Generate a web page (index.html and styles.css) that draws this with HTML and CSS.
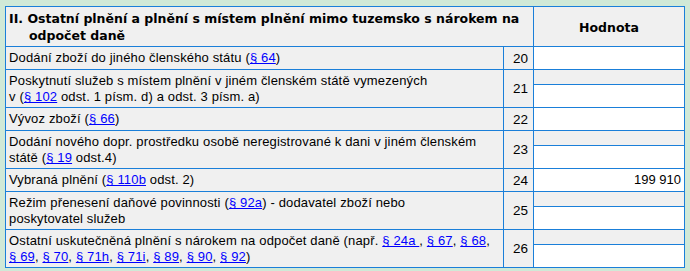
FILE: index.html
```html
<!DOCTYPE html>
<html lang="cs">
<head>
<meta charset="utf-8">
<link rel="stylesheet" href="styles.css">
</head>
<body>
<table class="dph">
  <colgroup><col class="c-label"><col class="c-num"><col class="c-val"></colgroup>
  <thead>
    <tr>
      <th class="head-title" colspan="2"><div class="hang">II. Ostatní plnění a plnění s místem plnění mimo tuzemsko s nárokem na<br>odpočet daně</div></th>
      <th class="head-val"><div class="hv">Hodnota</div></th>
    </tr>
  </thead>
  <tbody>
    <tr>
      <td class="lbl"><div class="in"><span class="t">Dodání zboží do jiného členského státu (<a href="#">§ 64</a>)</span></div></td>
      <td class="num">20</td>
      <td class="val"><div class="inp"></div></td>
    </tr>
    <tr class="tall">
      <td class="lbl"><div class="in"><span class="t">Poskytnutí služeb s místem plnění v jiném členském státě vymezených<br>v (<a href="#">§ 102</a> odst. 1 písm. d) a odst. 3 písm. a)</span></div></td>
      <td class="num">21</td>
      <td class="val"><div class="inp"></div></td>
    </tr>
    <tr>
      <td class="lbl"><div class="in"><span class="t">Vývoz zboží (<a href="#">§ 66</a>)</span></div></td>
      <td class="num">22</td>
      <td class="val"><div class="inp"></div></td>
    </tr>
    <tr class="tall">
      <td class="lbl"><div class="in"><span class="t">Dodání nového dopr. prostředku osobě neregistrované k dani v jiném členském<br>státě (<a href="#">§ 19</a> odst.4)</span></div></td>
      <td class="num">23</td>
      <td class="val"><div class="inp"></div></td>
    </tr>
    <tr>
      <td class="lbl"><div class="in"><span class="t">Vybraná plnění (<a href="#">§ 110b</a> odst. 2)</span></div></td>
      <td class="num">24</td>
      <td class="val"><div class="inp">199 910</div></td>
    </tr>
    <tr class="tall">
      <td class="lbl"><div class="in"><span class="t">Režim přenesení daňové povinnosti (<a href="#">§ 92a</a>) - dodavatel zboží nebo<br>poskytovatel služeb</span></div></td>
      <td class="num">25</td>
      <td class="val"><div class="inp"></div></td>
    </tr>
    <tr class="tall">
      <td class="lbl"><div class="in"><span class="t">Ostatní uskutečněná plnění s nárokem na odpočet daně (např. <a href="#">§ 24a </a>, <a href="#">§ 67</a>, <a href="#">§ 68</a>,<br><a href="#">§ 69</a>, <a href="#">§ 70</a>, <a href="#">§ 71h</a>, <a href="#">§ 71i</a>, <a href="#">§ 89</a>, <a href="#">§ 90</a>, <a href="#">§ 92</a>)</span></div></td>
      <td class="num">26</td>
      <td class="val"><div class="inp"></div></td>
    </tr>
  </tbody>
</table>
</body>
</html>
```

FILE: styles.css
```css
html, body {
  margin: 0;
  background: #d0e9d7;
}
body {
  padding: 6px 0 0 5px;
  font-family: "Liberation Sans", Arial, sans-serif;
  font-size: 13px;
  color: #000;
}
.dph {
  border-collapse: collapse;
  width: 679px;
  table-layout: fixed;
  background: #f0f0f0;
}
.c-label { width: 498px; }
.c-num { width: 30px; }
.c-val { width: 151px; }
.dph th, .dph td {
  border: 1px solid #1a7fd9;
  padding: 0;
}
.head-title {
  text-align: left;
  font-family: "DejaVu Sans", Verdana, sans-serif;
  font-weight: bold;
  font-size: 12.5px;
}
.hang {
  height: 39px;
  box-sizing: border-box;
  padding: 3px 3px 2px 23px;
  text-indent: -20px;
  line-height: 17px;
}
.head-val {
  font-family: "DejaVu Sans", Verdana, sans-serif;
  font-weight: bold;
  font-size: 12.5px;
}
.hv {
  height: 39px;
  display: flex;
  align-items: center;
  justify-content: center;
  padding-top: 2px;
  box-sizing: border-box;
}
.lbl .in {
  height: 22px;
  display: flex;
  align-items: center;
  padding: 0 3px;
  line-height: 16px;
  letter-spacing: 0.15px;
}
.lbl .t {
  display: block;
  white-space: nowrap;
}
.tall .lbl .in {
  height: 37px;
  padding-top: 1px;
  box-sizing: border-box;
}
.num {
  text-align: right;
  padding-right: 5px !important;
  vertical-align: middle;
  font-size: 13.5px;
}
.val {
  vertical-align: bottom;
}
.inp {
  height: 22px;
  background: #fff;
  box-sizing: border-box;
  text-align: right;
  padding: 3px 3px 0 0;
  line-height: 15px;
}
.tall .inp {
  height: 23px;
  border-top: 1px solid #1a7fd9;
}
a {
  color: #0000ff;
  text-decoration: underline;
}
```
